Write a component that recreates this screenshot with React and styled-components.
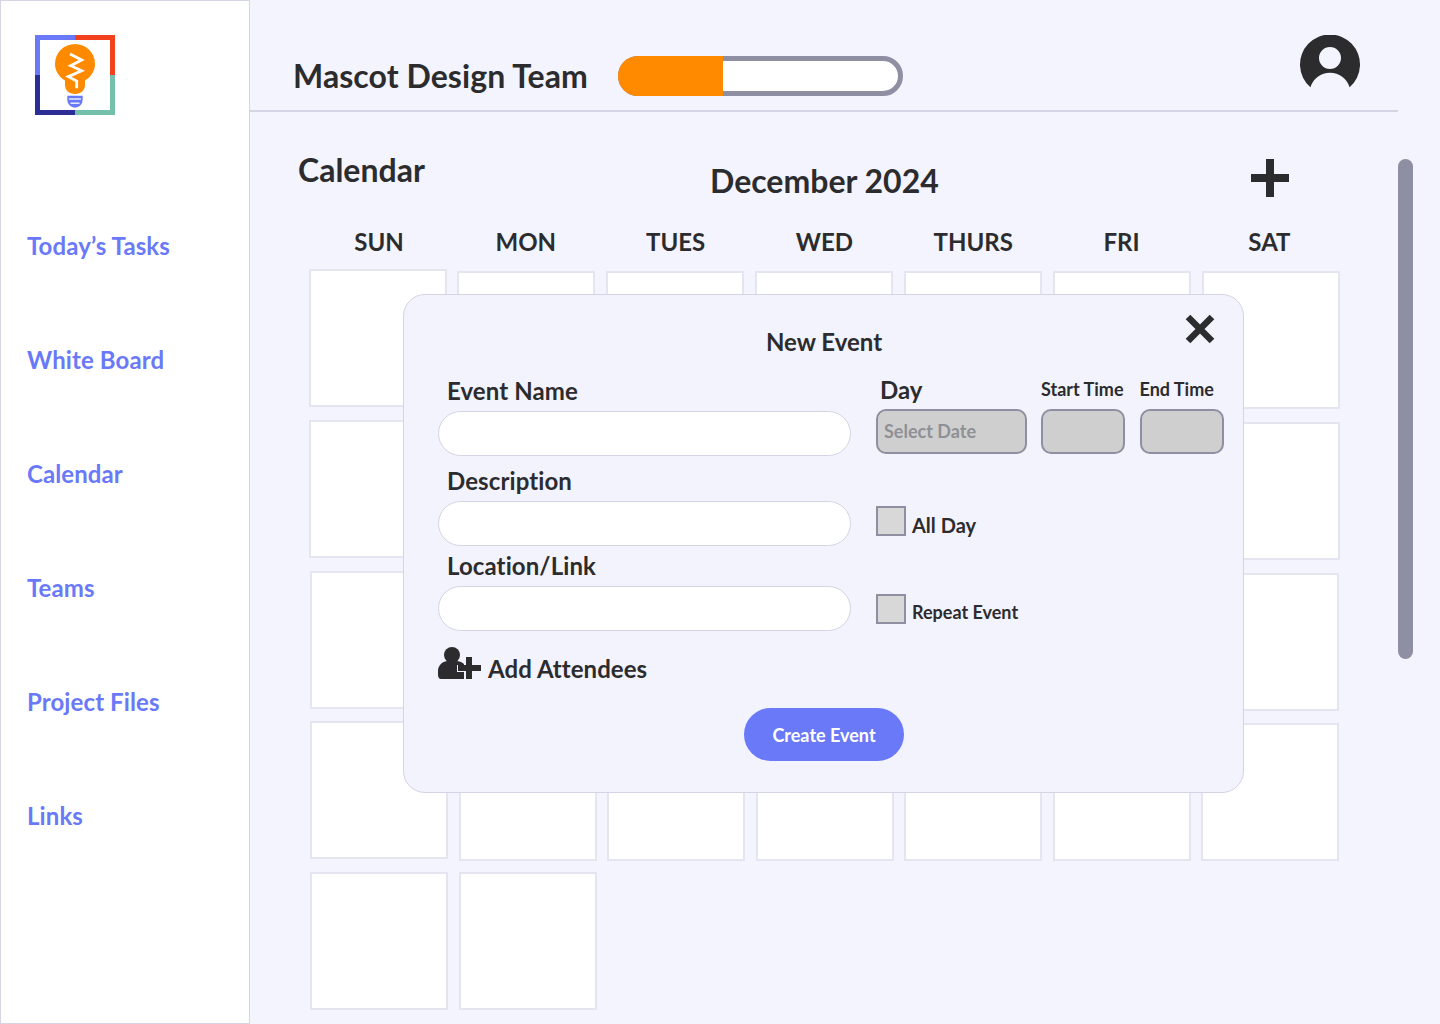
import React from "react";
import styled, { createGlobalStyle } from "styled-components";

const Global = createGlobalStyle`
  html, body { margin: 0; padding: 0; background: #f4f4fe; }
  body { font-family: "Lato", "Liberation Sans", sans-serif; color: #2c2c2e; }
  * { box-sizing: border-box; }
`;

const Page = styled.div`
  display: flex;
  width: 1440px;
  height: 1024px;
  overflow: hidden;
  background: #f4f4fe;
`;
const Sidebar = styled.aside`
  flex: 0 0 250px;
  height: 1024px;
  background: #fff;
  border: 1px solid #d4d4e4;
  padding: 34px 0 0 34px;
`;
const Nav = styled.nav`
  display: flex;
  flex-direction: column;
  gap: 84px;
  margin: 113px 0 0 -8px;
`;
const NavLink = styled.a`
  font-size: 24px;
  line-height: 30px;
  font-weight: 700;
  color: #6979f8;
  letter-spacing: 0.1px;
`;
const Main = styled.main`
  position: relative;
  flex: 1;
  min-width: 0;
`;
const Header = styled.header`
  display: flex;
  align-items: flex-start;
  height: 112px;
  margin-right: 42px;
  padding: 0 38px 0 43px;
  border-bottom: 2px solid #d4d4e4;
`;
const TeamName = styled.h1`
  margin: 56px 30px 0 0;
  font-size: 32px;
  line-height: 40px;
  font-weight: 700;
  letter-spacing: 0.07px;
`;
const Progress = styled.div`
  width: 285px;
  height: 40px;
  margin-top: 56px;
  border: 5px solid #8f8fa3;
  border-radius: 20px;
  background: #fff;
  position: relative;
`;
const ProgressFill = styled.div`
  position: absolute;
  left: -5px;
  top: -5px;
  bottom: -5px;
  border-radius: 20px 0 0 20px;
  background: #ff8a00;
`;
const Avatar = styled.svg`
  width: 60px;
  height: 60px;
  margin: 35px 0 0 auto;
  fill: #2c2c2e;
`;
const TitleRow = styled.div`
  display: grid;
  grid-template-columns: 412px 228px 1fr;
  height: 88px;
  padding-left: 48px;
`;
const PageTitle = styled.h2`
  margin: 38px 0 0;
  font-size: 32px;
  line-height: 40px;
  font-weight: 700;
`;
const Month = styled.h2`
  margin: 49px 0 0;
  font-size: 32px;
  line-height: 40px;
  font-weight: 700;
  text-align: center;
  white-space: nowrap;
`;
const PlusButton = styled.svg`
  width: 38px;
  height: 38px;
  margin: 47px 0 0 313px;
  fill: #2c2c2e;
`;
const DayRow = styled.div`
  display: grid;
  grid-template-columns: repeat(7, 148.33px);
  margin: 27px 0 0 54.8px;
`;
const DayName = styled.div`
  font-size: 24px;
  line-height: 30px;
  font-weight: 700;
  text-align: center;
  padding-left: ${(p) => (p.$nudge > 0 ? p.$nudge : 0)}px;
  padding-right: ${(p) => (p.$nudge < 0 ? -p.$nudge : 0)}px;
`;
const Weeks = styled.div`
  display: flex;
  flex-direction: column;
  margin-top: 14px;
`;
const Week = styled.div`
  display: flex;
  gap: ${(p) => p.$gap}px;
  margin-left: ${(p) => p.$left}px;
  margin-bottom: ${(p) => p.$after}px;
`;
const Cell = styled.div`
  flex: 0 0 138px;
  height: 138px;
  margin-top: ${(p) => (p.$lift ? -p.$lift : 0)}px;
  margin-bottom: ${(p) => (p.$lift ? p.$lift : 0)}px;
  background: #fff;
  border: 2px solid #e5e5f1;
`;
const ScrollThumb = styled.div`
  position: absolute;
  left: 1148px;
  top: 159px;
  width: 15px;
  height: 500px;
  border-radius: 8px;
  background: #8f8fa3;
`;
const Modal = styled.section`
  position: absolute;
  left: 153px;
  top: 294px;
  width: 841px;
  height: 499px;
  padding: 30px 20px 0 34px;
  background: #f3f3fd;
  border: 1px solid #d4d4e4;
  border-radius: 22px;
`;
const ModalTitle = styled.h3`
  margin: 0;
  width: 772px;
  font-size: 24px;
  line-height: 34px;
  font-weight: 700;
  text-align: center;
`;
const CloseIcon = styled.svg`
  position: absolute;
  right: 28px;
  top: 19px;
  width: 30px;
  height: 30px;
  stroke: #2c2c2e;
  stroke-width: 6.5;
`;
const FormGrid = styled.div`
  display: flex;
  gap: 25px;
  margin-top: 17px;
`;
const LeftColumn = styled.div`
  flex: 0 0 413px;
  display: flex;
  flex-direction: column;
`;
const Field = styled.div`
  display: flex;
  flex-direction: column;
  margin-bottom: ${(p) => p.$after}px;
`;
const FieldLabel = styled.label`
  font-size: 24px;
  line-height: 30px;
  height: 35px;
  font-weight: 700;
  padding-left: 9px;
  letter-spacing: 0.1px;
`;
const TextField = styled.div`
  height: 45px;
  background: #fff;
  border: 1px solid #d4d4e4;
  border-radius: 23px;
`;
const Attendees = styled.div`
  display: flex;
  align-items: flex-start;
  gap: 7px;
  margin-top: 16px;
  font-size: 24px;
  line-height: 30px;
  font-weight: 700;
  letter-spacing: 0.05px;
`;
const AttendeeIcon = styled.svg`
  flex: 0 0 43px;
  height: 32px;
  fill: #2c2c2e;
`;
const AttendeeText = styled.span`
  margin-top: 7px;
`;
const RightColumn = styled.div`
  display: flex;
  flex-direction: column;
`;
const TimeRow = styled.div`
  display: flex;
  gap: 14.5px;
`;
const TimeField = styled.div`
  display: flex;
  flex-direction: column;
  width: ${(p) => p.$width}px;
`;
const SmallHead = styled.div`
  height: 33px;
  font-weight: 700;
  font-size: ${(p) => (p.$large ? 24 : 18)}px;
  line-height: 27px;
  padding-left: ${(p) => (p.$large ? 4 : 0)}px;
  white-space: nowrap;
`;
const GreyBox = styled.div`
  height: 45px;
  padding-left: 6px;
  background: #cfcfcf;
  border: 2px solid #8f8fa3;
  border-radius: 10px;
  color: #8f8f96;
  font-size: 18px;
  line-height: 41px;
  font-weight: 700;
`;
const CheckRow = styled.label`
  display: flex;
  gap: 6px;
  margin-top: ${(p) => p.$top}px;
  font-weight: 700;
  font-size: ${(p) => p.$size}px;
  line-height: 30px;
`;
const CheckBox = styled.span`
  width: 30px;
  height: 30px;
  background: #d8d8d8;
  border: 2px solid #8f8fa3;
`;
const CheckText = styled.span`
  padding-top: ${(p) => p.$pad}px;
`;
const CreateButton = styled.button`
  display: block;
  width: 160px;
  height: 53px;
  margin: 24px 0 0 306px;
  border: 0;
  border-radius: 27px;
  background: #6979f8;
  color: #fff;
  font-family: inherit;
  font-size: 18px;
  font-weight: 700;
`;

const navItems = ["Today’s Tasks", "White Board", "Calendar", "Teams", "Project Files", "Links"];
const days = [
  { name: "SUN", nudge: 0 },
  { name: "MON", nudge: -3 },
  { name: "TUES", nudge: 0 },
  { name: "WED", nudge: 1 },
  { name: "THURS", nudge: 2 },
  { name: "FRI", nudge: 2 },
  { name: "SAT", nudge: 1 },
];
const weeks = [
  { left: 58.6, gap: 10.83, after: 13, lift: 2.5, count: 7 },
  { left: 58.6, gap: 10.83, after: 13, lift: 2, count: 7 },
  { left: 60, gap: 10.5, after: 12, lift: 2, count: 7 },
  { left: 60, gap: 10.5, after: 11, lift: 2, count: 7 },
  { left: 60, gap: 10.5, after: 0, lift: 0, count: 2 },
];

const Logo = () => (
  <svg width="80" height="80" viewBox="0 0 80 80" aria-label="logo">
    <path d="M0 40V0h40v5H5v35z" fill="#6979f8" />
    <path d="M40 0h40v40h-5V5H40z" fill="#f4411d" />
    <path d="M0 40h5v35h35v5H0z" fill="#2d2d96" />
    <path d="M75 40h5v40H40v-5h35z" fill="#74c0ab" />
    <path d="M30 45.500C24 42 20 36 20 29a20 20 0 0 1 40 0c0 7-4 13-10 16.500V50c0 5-4 9-10 9s-10-4-10-9z" fill="#ff8a00" />
    <path d="M35 19l11.700 6-11 5.700 11 5-13.400 6 8.400 4.300v7.300" fill="none" stroke="#fff" strokeWidth="2.800" />
    <path d="M32.300 60.700h15.400v4a7.700 8 0 0 1-15.400 0z" fill="#6979f8" />
    <path d="M34 64h12M35.500 68.300h9" stroke="#fff" strokeWidth="1.500" opacity="0.85" />
  </svg>
);

export default function App() {
  return (
    <Page>
      <Global />
      <Sidebar>
        <Logo />
        <Nav>
          {navItems.map((n) => <NavLink key={n}>{n}</NavLink>)}
        </Nav>
      </Sidebar>
      <Main>
        <Header>
          <TeamName>Mascot Design Team</TeamName>
          <Progress><ProgressFill style={{ width: "105px" }} /></Progress>
          <Avatar viewBox="0 0 60 60">
            <path fillRule="evenodd" d="M10.400 52.200A30 30 0 1 1 49.600 52.200A20.500 20.500 0 0 0 10.400 52.200ZM30 12a11 11 0 1 0 0 22a11 11 0 1 0 0-22Z" />
          </Avatar>
        </Header>
        <TitleRow>
          <PageTitle>Calendar</PageTitle>
          <Month>December 2024</Month>
          <PlusButton viewBox="0 0 38 38"><path d="M15 0h8v15h15v8H23v15h-8V23H0v-8h15z" /></PlusButton>
        </TitleRow>
        <DayRow>
          {days.map((d) => <DayName key={d.name} $nudge={d.nudge}>{d.name}</DayName>)}
        </DayRow>
        <Weeks>
          {weeks.map((w, i) => (
            <Week key={i} $left={w.left} $gap={w.gap} $after={w.after}>
              {Array.from({ length: w.count }).map((_, j) => (
                <Cell key={j} $lift={j === 0 ? w.lift : 0} />
              ))}
            </Week>
          ))}
        </Weeks>
        <ScrollThumb />
        <Modal>
          <ModalTitle>New Event</ModalTitle>
          <CloseIcon viewBox="0 0 30 30"><path d="M3 3l24 24M27 3L3 27" /></CloseIcon>
          <FormGrid>
            <LeftColumn>
              <Field $after={10}>
                <FieldLabel>Event Name</FieldLabel>
                <TextField />
              </Field>
              <Field $after={5}>
                <FieldLabel>Description</FieldLabel>
                <TextField />
              </Field>
              <Field $after={0}>
                <FieldLabel>Location/Link</FieldLabel>
                <TextField />
              </Field>
              <Attendees>
                <AttendeeIcon viewBox="0 0 43 32">
                  <circle cx="14" cy="8" r="8" />
                  <path d="M0 28v-4c0-6 5-10 10-10h8c3 0 6 1 8 3v1h-7v7h7v7H3c-2 0-3-2-3-4z" />
                  <path d="M28 10h6v8h9v6h-9v8h-6v-8H20v-6h8z" />
                </AttendeeIcon>
                <AttendeeText>Add Attendees</AttendeeText>
              </Attendees>
            </LeftColumn>
            <RightColumn>
              <TimeRow>
                <TimeField $width={150.5}>
                  <SmallHead $large>Day</SmallHead>
                  <GreyBox>Select Date</GreyBox>
                </TimeField>
                <TimeField $width={84}>
                  <SmallHead>Start Time</SmallHead>
                  <GreyBox />
                </TimeField>
                <TimeField $width={84}>
                  <SmallHead>End Time</SmallHead>
                  <GreyBox />
                </TimeField>
              </TimeRow>
              <CheckRow $top={52} $size={20}><CheckBox /><CheckText $pad={4}>All Day</CheckText></CheckRow>
              <CheckRow $top={54} $size={18}><CheckBox /><CheckText $pad={3}>Repeat Event</CheckText></CheckRow>
            </RightColumn>
          </FormGrid>
          <CreateButton>Create Event</CreateButton>
        </Modal>
      </Main>
    </Page>
  );
}
